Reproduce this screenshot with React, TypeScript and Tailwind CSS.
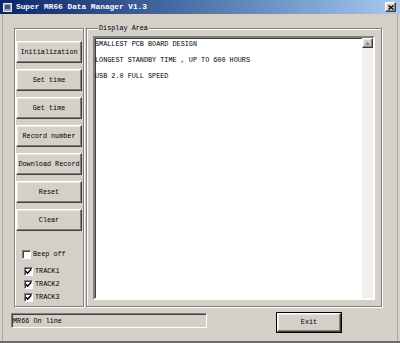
import React from 'react';

const FONT = "font-['Liberation_Mono','DejaVu_Sans_Mono',monospace]";

const RAISED =
  'bg-[#d4d0c8] border border-t-white border-l-white border-r-[#404040] border-b-[#404040] shadow-[inset_-1px_-1px_0_#808080,inset_1px_1px_0_#ece9e3]';
const SUNKEN =
  'border border-t-[#808080] border-l-[#808080] border-r-white border-b-white shadow-[inset_1px_1px_0_#404040]';
const ETCHED = 'border border-[#808080] shadow-[inset_1px_1px_0_#fff,1px_1px_0_#fff]';

const BUTTONS = ['Initialization', 'Set time', 'Get time', 'Record number', 'Download Record', 'Reset', 'Clear'];
const LINES = ['SMALLEST PCB BOARD DESIGN', 'LONGEST STANDBY TIME , UP TO 600 HOURS', 'USB 2.0 FULL SPEED'];

const CheckBox = ({ checked }: { checked: boolean }) => (
  <div className={`w-[9px] h-[9px] bg-white ${SUNKEN} flex items-center justify-center`}>
    {checked && (
      <svg width="7" height="7" viewBox="0 0 7 7">
        <polyline points="0.8,3.2 2.6,5.2 6.2,1.2" fill="none" stroke="#000" strokeWidth="1.5" />
      </svg>
    )}
  </div>
);

export default function App() {
  return (
    <div className={`w-[400px] h-[343px] bg-[#d4d0c8] flex flex-col border-b-2 border-b-[#6e6c68] ${FONT}`}>
      {/* title bar */}
      <div className="h-[14px] flex items-center bg-gradient-to-r from-[#0a246a] to-[#a6caf0] px-[3px]">
        <div className="w-[9px] h-[9px] bg-[#9ea6b4] border border-[#e8e8e8] flex items-center justify-center">
          <div className="w-[5px] h-[4px] bg-[#405080]" />
        </div>
        <span className="ml-[4px] text-[7.8px] leading-[10px] font-bold text-white">Super MR66 Data Manager V1.3</span>
        <div className={`ml-auto mr-[1px] w-[11px] h-[10px] ${RAISED} flex items-center justify-center`}>
          <svg width="6" height="5" viewBox="0 0 6 5">
            <path d="M0.5 0.5 L5.5 4.5 M5.5 0.5 L0.5 4.5" stroke="#000" strokeWidth="1.3" />
          </svg>
        </div>
      </div>

      {/* body */}
      <div className="flex-1 flex flex-col mx-[2px] border-l border-r border-[#aaa79f] pl-[8px] pr-[15px] pt-[14px]">
        <div className="flex gap-[2px] h-[279px]">
          {/* left panel */}
          <div className={`ml-[3px] w-[70px] ${ETCHED} flex flex-col pt-[12px] px-[1px]`}>
            <div className="flex flex-col gap-[6px]">
              {BUTTONS.map((b) => (
                <div key={b} className={`h-[22px] w-full ${RAISED} flex items-center justify-center text-[6.8px] text-black`}>
                  {b}
                </div>
              ))}
            </div>
            <div className="mt-[19px] flex items-center ml-[6px] gap-[2px] text-[6.8px] leading-[9px]">
              <CheckBox checked={false} />
              <span>Beep off</span>
            </div>
            <div className="mt-[8px] flex flex-col gap-[4px] ml-[8px]">
              {['TRACK1', 'TRACK2', 'TRACK3'].map((t) => (
                <div key={t} className="flex items-center gap-[2px] text-[6.8px] leading-[9px]">
                  <CheckBox checked />
                  <span>{t}</span>
                </div>
              ))}
            </div>
          </div>

          {/* display area */}
          <fieldset className={`-mt-[4px] flex-1 ${ETCHED} px-[6px] pb-[6px] pt-[4px] flex flex-col min-w-0`}>
            <legend className="ml-[5px] px-[1px] text-[6.8px] leading-[8px] bg-[#d4d0c8]">Display Area</legend>
            <div className={`flex-1 flex bg-white ${SUNKEN} border-2`}>
              <div className="flex-1 flex flex-col gap-[8px] pt-[2px] text-[6.8px] leading-[8px] text-black">
                {LINES.map((l) => (
                  <div key={l}>{l}</div>
                ))}
              </div>
              <div className="w-[11px] bg-[#f1efeb] flex flex-col">
                <div className={`h-[10px] ${RAISED} flex items-center justify-center`}>
                  <svg width="5" height="3" viewBox="0 0 5 3">
                    <path d="M2.5 0 L5 3 L0 3 Z" fill="#808080" />
                  </svg>
                </div>
              </div>
            </div>
          </fieldset>
        </div>

        {/* bottom row */}
        <div className="mt-[5px] flex items-start">
          <div className={`mt-[1px] w-[196px] h-[15px] ${SUNKEN} flex items-center pl-[1px] text-[6.8px] leading-[8px]`}>
            MR66 On line
          </div>
          <div className="ml-[69px] w-[66px] h-[21px] border border-black">
            <div className={`h-full ${RAISED} flex items-center justify-center text-[6.8px]`}>Exit</div>
          </div>
        </div>
      </div>
    </div>
  );
}
